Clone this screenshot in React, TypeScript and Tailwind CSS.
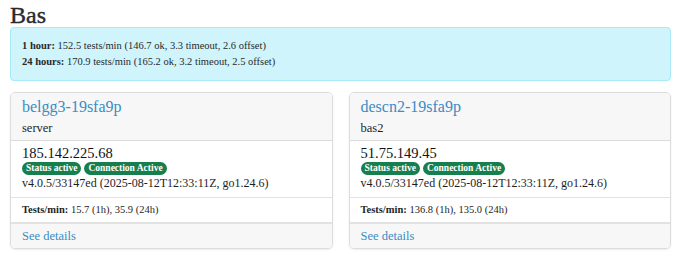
import React from "react";

const font = { fontFamily: '"Liberation Serif", "DejaVu Serif", serif' };

type Node = {
  name: string;
  role: string;
  ip: string;
  tests: string;
};

const nodes: Node[] = [
  { name: "belgg3-19sfa9p", role: "server", ip: "185.142.225.68", tests: "15.7 (1h), 35.9 (24h)" },
  { name: "descn2-19sfa9p", role: "bas2", ip: "51.75.149.45", tests: "136.8 (1h), 135.0 (24h)" },
];

function Card({ n }: { n: Node }) {
  return (
    <div className="flex flex-col border border-[#dcdcdc] rounded-[5px] shadow-[0_1px_2px_rgba(0,0,0,0.08)] overflow-hidden">
      <div className="bg-[#f7f7f7] border-b border-[#dcdcdc] px-[11px] pt-[4px] h-[48px]">
        <div className="text-[16px] leading-[20px] text-[#3a8cc4]">{n.name}</div>
        <div className="text-[12.5px] leading-[20px] text-[#1e1e1e] mt-[1px]">{n.role}</div>
      </div>
      <div className="px-[11px] pt-[4px] pb-[6px] border-b border-[#e2e2e2]">
        <div className="text-[14.5px] leading-[16px] text-[#111]">{n.ip}</div>
        <div className="flex gap-[3px] mt-[1px]">
          <span className="bg-[#177f4d] text-white text-[9.5px] font-bold leading-[13px] px-[4px] rounded-full">Status active</span>
          <span className="bg-[#177f4d] text-white text-[9.5px] font-bold leading-[13px] px-[4px] rounded-full">Connection Active</span>
        </div>
        <div className="text-[12px] leading-[16px] text-[#1e1e1e] whitespace-nowrap">v4.0.5/33147ed (2025-08-12T12:33:11Z, go1.24.6)</div>
      </div>
      <div className="px-[11px] h-[26px] flex items-center text-[10.5px] text-[#1e1e1e] border-b-2 border-[#e2e2e2]">
        <span className="font-bold">Tests/min:</span>&nbsp;{n.tests}
      </div>
      <div className="bg-[#f7f7f7] px-[11px] flex-1 flex items-center text-[12.5px] text-[#3a8cc4]">See details</div>
    </div>
  );
}

export default function App() {
  return (
    <div className="w-[690px] h-[257px] bg-white px-[10px] pt-[3px] text-[#222]" style={font}>
      <h1 className="text-[24px] leading-[24px] font-normal text-[#2a2a2a] [-webkit-text-stroke:0.4px_#2a2a2a]">Bas</h1>
      <div className="bg-[#cff4fc] border border-[#a6e9f7] rounded-[4px] px-[11px] py-[10px] w-[661px]">
        <div className="text-[10.5px] leading-[16px] text-[#2a2a2a]">
          <span className="font-bold">1 hour:</span> 152.5 tests/min (146.7 ok, 3.3 timeout, 2.6 offset)
        </div>
        <div className="text-[10.5px] leading-[16px] text-[#2a2a2a]">
          <span className="font-bold">24 hours:</span> 170.9 tests/min (165.2 ok, 3.2 timeout, 2.5 offset)
        </div>
      </div>
      <div className="grid grid-cols-2 gap-[16px] mt-[11px] w-[661px] h-[157px]">
        {nodes.map((n) => (
          <Card key={n.name} n={n} />
        ))}
      </div>
    </div>
  );
}
